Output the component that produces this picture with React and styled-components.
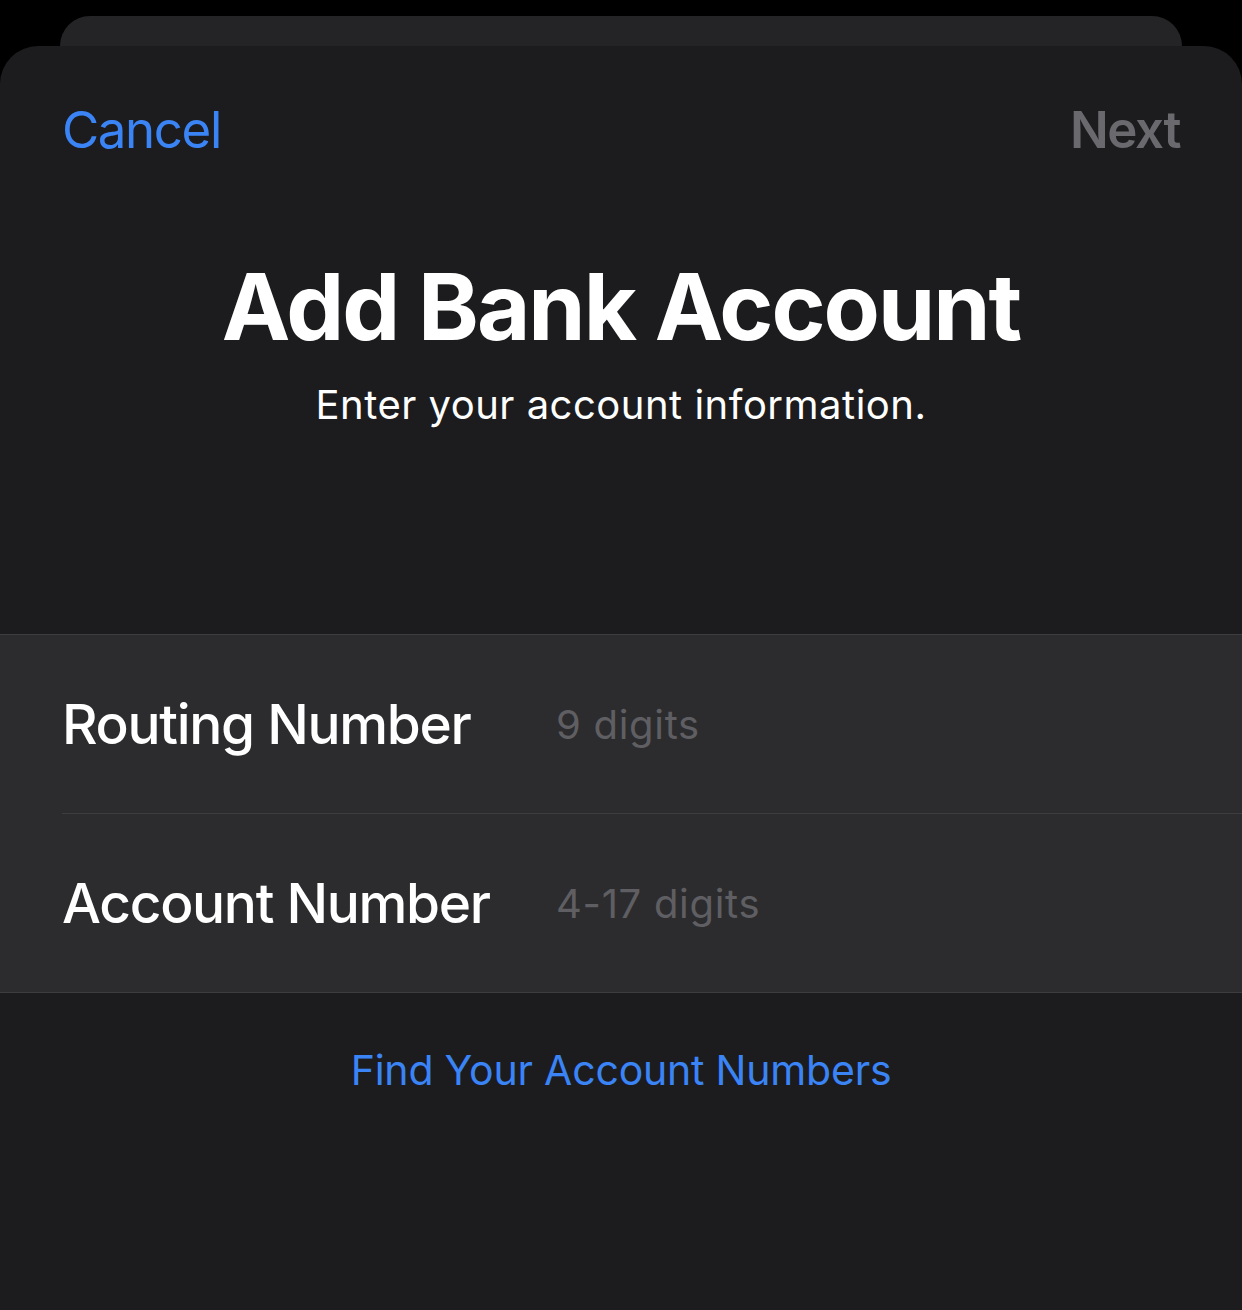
import React from 'react';
import styled, { createGlobalStyle } from 'styled-components';

const GlobalStyle = createGlobalStyle`
  html, body {
    margin: 0;
    padding: 0;
    background: #000;
  }
  body {
    font-family: Inter, "Noto Sans", sans-serif;
    -webkit-font-smoothing: antialiased;
  }
`;

const Page = styled.div`
  min-height: 1310px;
  padding-top: 16px;
  box-sizing: border-box;
  background: #000;
  display: flex;
  flex-direction: column;
`;

const BackCard = styled.div`
  height: 30px;
  margin: 0 60px;
  background: #242427;
  border-radius: 30px 30px 0 0;
`;

const Sheet = styled.div`
  flex: 1;
  background: #1c1c1e;
  border-radius: 38px 38px 0 0;
  display: flex;
  flex-direction: column;
  padding-top: 54px;
`;

const NavBar = styled.div`
  display: flex;
  justify-content: space-between;
  align-items: center;
  padding: 0 62px;
`;

const NavButton = styled.button`
  background: none;
  border: none;
  padding: 0;
  font-family: inherit;
  font-size: 51px;
  line-height: 60px;
  font-weight: ${(p) => (p.bold ? 600 : 400)};
  color: ${(p) => (p.disabled ? '#6a6a6e' : '#3a84f6')};
  letter-spacing: -1.4px;
`;

const Header = styled.div`
  display: flex;
  flex-direction: column;
  align-items: center;
  text-align: center;
  margin-top: 96px;
`;

const Title = styled.h1`
  margin: 0;
  font-size: 92px;
  line-height: 101px;
  font-weight: 700;
  color: #fff;
  letter-spacing: -2px;
`;

const Subtitle = styled.p`
  margin: 24px 0 0;
  font-size: 40px;
  line-height: 48px;
  color: #fff;
  letter-spacing: 0.5px;
`;

const Form = styled.div`
  margin-top: 205px;
  background: #2c2c2e;
  border-top: 1px solid #3d3d40;
  border-bottom: 1px solid #3d3d40;
`;

const Row = styled.label`
  display: flex;
  align-items: center;
  height: 178px;
  margin-left: 62px;
  border-top: ${(p) => (p.first ? 'none' : '1px solid #3d3d40')};
`;

const RowLabel = styled.span`
  width: 494px;
  flex-shrink: 0;
  font-size: 55px;
  line-height: 1;
  font-weight: 500;
  color: #fff;
  letter-spacing: -1.3px;
`;

const Field = styled.input`
  flex: 1;
  background: none;
  border: none;
  outline: none;
  padding: 0;
  font-family: inherit;
  font-size: 40px;
  color: #fff;
  letter-spacing: 0.7px;
  &::placeholder {
    color: #5f5f63;
  }
`;

const LinkButton = styled.button`
  align-self: center;
  margin-top: 52px;
  background: none;
  border: none;
  padding: 0;
  font-family: inherit;
  font-size: 41px;
  line-height: 50px;
  color: #3a84f6;
  letter-spacing: -0.2px;
`;

export default function App() {
  return (
    <>
      <GlobalStyle />
      <Page>
        <BackCard />
        <Sheet>
          <NavBar>
            <NavButton>Cancel</NavButton>
            <NavButton bold disabled>Next</NavButton>
          </NavBar>
          <Header>
            <Title>Add Bank Account</Title>
            <Subtitle>Enter your account information.</Subtitle>
          </Header>
          <Form>
            <Row first>
              <RowLabel>Routing Number</RowLabel>
              <Field placeholder="9 digits" />
            </Row>
            <Row>
              <RowLabel>Account Number</RowLabel>
              <Field placeholder="4-17 digits" />
            </Row>
          </Form>
          <LinkButton>Find Your Account Numbers</LinkButton>
        </Sheet>
      </Page>
    </>
  );
}
